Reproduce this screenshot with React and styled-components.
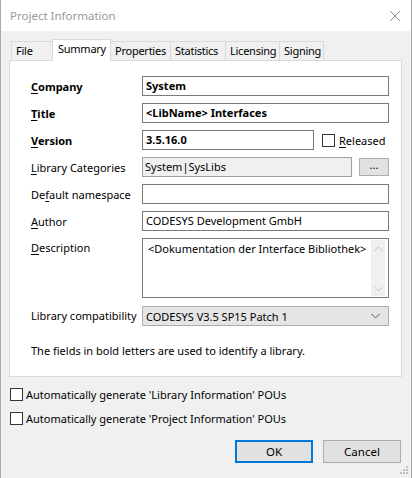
import React from 'react';
import styled, { createGlobalStyle } from 'styled-components';

const GlobalStyle = createGlobalStyle`
  html, body {
    margin: 0;
    padding: 0;
    background: #ffffff;
  }
  body {
    font-family: "Noto Sans", "Open Sans", sans-serif;
    font-size: 11px;
    color: #000;
  }
  * {
    box-sizing: border-box;
  }
`;

const Window = styled.div`
  position: relative;
  width: 412px;
  height: 478px;
  display: flex;
  flex-direction: column;
  background: #f0f0f0;
  border-left: 1px solid #aaaaaa;
  border-right: 1px solid #aaaaaa;
  overflow: hidden;
`;

const TitleBar = styled.div`
  height: 31px;
  flex: none;
  display: flex;
  align-items: center;
  justify-content: space-between;
  padding: 0 9px 0 9px;
  background: #fff;
  color: #999;
  font-size: 11.5px;
`;

const CloseIcon = styled.svg`
  width: 12px;
  height: 12px;
  margin-right: 1px;
`;

const Body = styled.div`
  flex: 1;
  display: flex;
  flex-direction: column;
  padding: 8px 9px 0 8px;
`;

const TabStrip = styled.div`
  display: flex;
  align-items: flex-start;
  height: 22px;
  padding-left: 2px;
  margin-bottom: -1px;
`;

const Tab = styled.div`
  position: relative;
  width: ${p => p.$w}px;
  height: ${p => (p.$active ? 22 : 19)}px;
  margin-top: ${p => (p.$active ? 0 : 2)}px;
  margin-left: -1px;
  padding-left: ${p => (p.$active ? 5 : 4)}px;
  line-height: 18px;
  letter-spacing: -0.25px;
  background: ${p => (p.$active ? '#fff' : '#f0f0f0')};
  border: 1px solid #d9d9d9;
  border-bottom: none;
  z-index: ${p => (p.$active ? 2 : 0)};
  white-space: nowrap;
  &:first-child {
    margin-left: 0;
  }
`;

const Panel = styled.div`
  position: relative;
  z-index: 1;
  height: 317px;
  background: #fff;
  border: 1px solid #d9d9d9;
  padding: 15px 12px 0 21px;
`;

const Form = styled.div`
  display: grid;
  grid-template-columns: 111px 1fr;
  row-gap: 7px;
  align-items: center;
`;

const Label = styled.div`
  font-weight: ${p => (p.$bold ? 700 : 400)};
  align-self: ${p => (p.$top ? 'start' : 'center')};
  padding-top: ${p => (p.$top ? 2 : 0)}px;
  white-space: nowrap;
  u {
    text-decoration-thickness: 1px;
    text-underline-offset: 2px;
  }
`;

const Input = styled.div`
  height: 20px;
  width: ${p => (p.$w ? `${p.$w}px` : '100%')};
  flex: none;
  border: 1px solid ${p => (p.$disabled ? '#a0a0a0' : '#7a7a7a')};
  background: ${p => (p.$disabled ? '#f0f0f0' : '#fff')};
  padding-left: ${p => (p.$disabled ? 2 : 3)}px;
  line-height: 18px;
  font-weight: ${p => (p.$bold ? 700 : 400)};
  white-space: nowrap;
  overflow: hidden;
`;

const FieldRow = styled.div`
  display: flex;
  align-items: center;
  justify-content: ${p => p.$justify || 'flex-start'};
`;

const CheckBox = styled.span`
  display: inline-block;
  flex: none;
  width: 13px;
  height: 13px;
  border: 1px solid #333;
  background: #fff;
`;

const CheckLabel = styled.label`
  display: flex;
  align-items: center;
  gap: ${p => p.$gap || 4}px;
  margin-left: ${p => p.$ml || 0}px;
  height: 16px;
  white-space: nowrap;
  u {
    text-decoration-thickness: 1px;
    text-underline-offset: 2px;
  }
`;

const SmallButton = styled.div`
  width: 30px;
  height: 18px;
  border: 1px solid #adadad;
  background: #e1e1e1;
  text-align: center;
  line-height: 12px;
  font-size: 11px;
`;

const TextArea = styled.div`
  height: 60px;
  display: flex;
  border: 1px solid #7a7a7a;
  background: #fff;
  padding: 1px 3px 1px 0;
`;

const TextAreaText = styled.div`
  flex: 1;
  padding: 1px 0 0 5px;
  line-height: 16px;
`;

const ScrollBar = styled.div`
  width: 14px;
  display: flex;
  flex-direction: column;
  justify-content: space-between;
  align-items: center;
  background: #f0f0f0;
  padding: 6px 0 4px;
`;

const Select = styled.div`
  height: 20px;
  margin-top: 1px;
  display: flex;
  align-items: center;
  justify-content: space-between;
  border: 1px solid #acacac;
  background: #e5e5e5;
  padding: 0 8px 0 3px;
`;

const Note = styled.div`
  margin-top: 17px;
  line-height: 16px;
`;

const Options = styled.div`
  display: flex;
  flex-direction: column;
  gap: 8px;
  margin-top: 9px;
  padding-left: 1px;
`;

const ButtonRow = styled.div`
  display: flex;
  justify-content: flex-end;
  gap: 10px;
  margin-top: 14px;
  padding-right: 1px;
`;

const Button = styled.div`
  width: 78px;
  height: 23px;
  display: flex;
  align-items: center;
  justify-content: center;
  background: #e1e1e1;
  border: ${p => (p.$default ? '2px solid #0078d7' : '1px solid #adadad')};
  font-size: 11.5px;
`;

const Grip = styled.svg`
  position: absolute;
  right: 2px;
  bottom: 3px;
`;

const Chevron = ({ up, color = '#c2c2c2' }) => (
  <svg width="9" height="6" viewBox="0 0 9 6">
    <polyline
      points={up ? '0.5,5 4.5,1 8.5,5' : '0.5,1 4.5,5 8.5,1'}
      fill="none"
      stroke={color}
      strokeWidth="1"
    />
  </svg>
);

const tabs = [
  { name: 'File', w: 42 },
  { name: 'Summary', w: 59, active: true },
  { name: 'Properties', w: 61 },
  { name: 'Statistics', w: 56 },
  { name: 'Licensing', w: 55 },
  { name: 'Signing', w: 45 },
];

export default function App() {
  return (
    <>
      <GlobalStyle />
      <Window>
        <TitleBar>
          <span>Project Information</span>
          <CloseIcon viewBox="0 0 12 12">
            <path d="M1 1 L11 11 M11 1 L1 11" stroke="#8a8a8a" strokeWidth="1" fill="none" />
          </CloseIcon>
        </TitleBar>
        <Body>
          <TabStrip>
            {tabs.map(t => (
              <Tab key={t.name} $w={t.w} $active={t.active}>{t.name}</Tab>
            ))}
          </TabStrip>
          <Panel>
            <Form>
              <Label $bold><u>C</u>ompany</Label>
              <Input $bold>System</Input>

              <Label $bold><u>T</u>itle</Label>
              <Input $bold>&lt;LibName&gt; Interfaces</Input>

              <Label $bold><u>V</u>ersion</Label>
              <FieldRow>
                <Input $bold $w={172}>3.5.16.0</Input>
                <CheckLabel $ml={8} $gap={4}>
                  <CheckBox />
                  <span><u>R</u>eleased</span>
                </CheckLabel>
              </FieldRow>

              <Label><u>L</u>ibrary Categories</Label>
              <FieldRow $justify="space-between">
                <Input $disabled $w={210}>System|SysLibs</Input>
                <SmallButton>...</SmallButton>
              </FieldRow>

              <Label>De<u>f</u>ault namespace</Label>
              <Input />

              <Label><u>A</u>uthor</Label>
              <Input>CODESYS Development GmbH</Input>

              <Label $top><u>D</u>escription</Label>
              <TextArea>
                <TextAreaText>&lt;Dokumentation der Interface Bibliothek&gt;</TextAreaText>
                <ScrollBar>
                  <Chevron up />
                  <Chevron />
                </ScrollBar>
              </TextArea>

              <Label>Library compatibility</Label>
              <Select>
                <span>CODESYS V3.5 SP15 Patch 1</span>
                <Chevron color="#555" />
              </Select>
            </Form>
            <Note>The fields in bold letters are used to identify a library.</Note>
          </Panel>
          <Options>
            <CheckLabel $gap={3}>
              <CheckBox />
              <span>Automatically generate 'Library Information' POUs</span>
            </CheckLabel>
            <CheckLabel $gap={3}>
              <CheckBox />
              <span>Automatically generate 'Project Information' POUs</span>
            </CheckLabel>
          </Options>
          <ButtonRow>
            <Button $default>OK</Button>
            <Button>Cancel</Button>
          </ButtonRow>
        </Body>
        <Grip width="10" height="10" viewBox="0 0 10 10">
          <g fill="#bdbdbd">
            <rect x="7" y="1" width="2" height="2" />
            <rect x="4" y="4" width="2" height="2" />
            <rect x="7" y="4" width="2" height="2" />
            <rect x="1" y="7" width="2" height="2" />
            <rect x="4" y="7" width="2" height="2" />
            <rect x="7" y="7" width="2" height="2" />
          </g>
        </Grip>
      </Window>
    </>
  );
}
